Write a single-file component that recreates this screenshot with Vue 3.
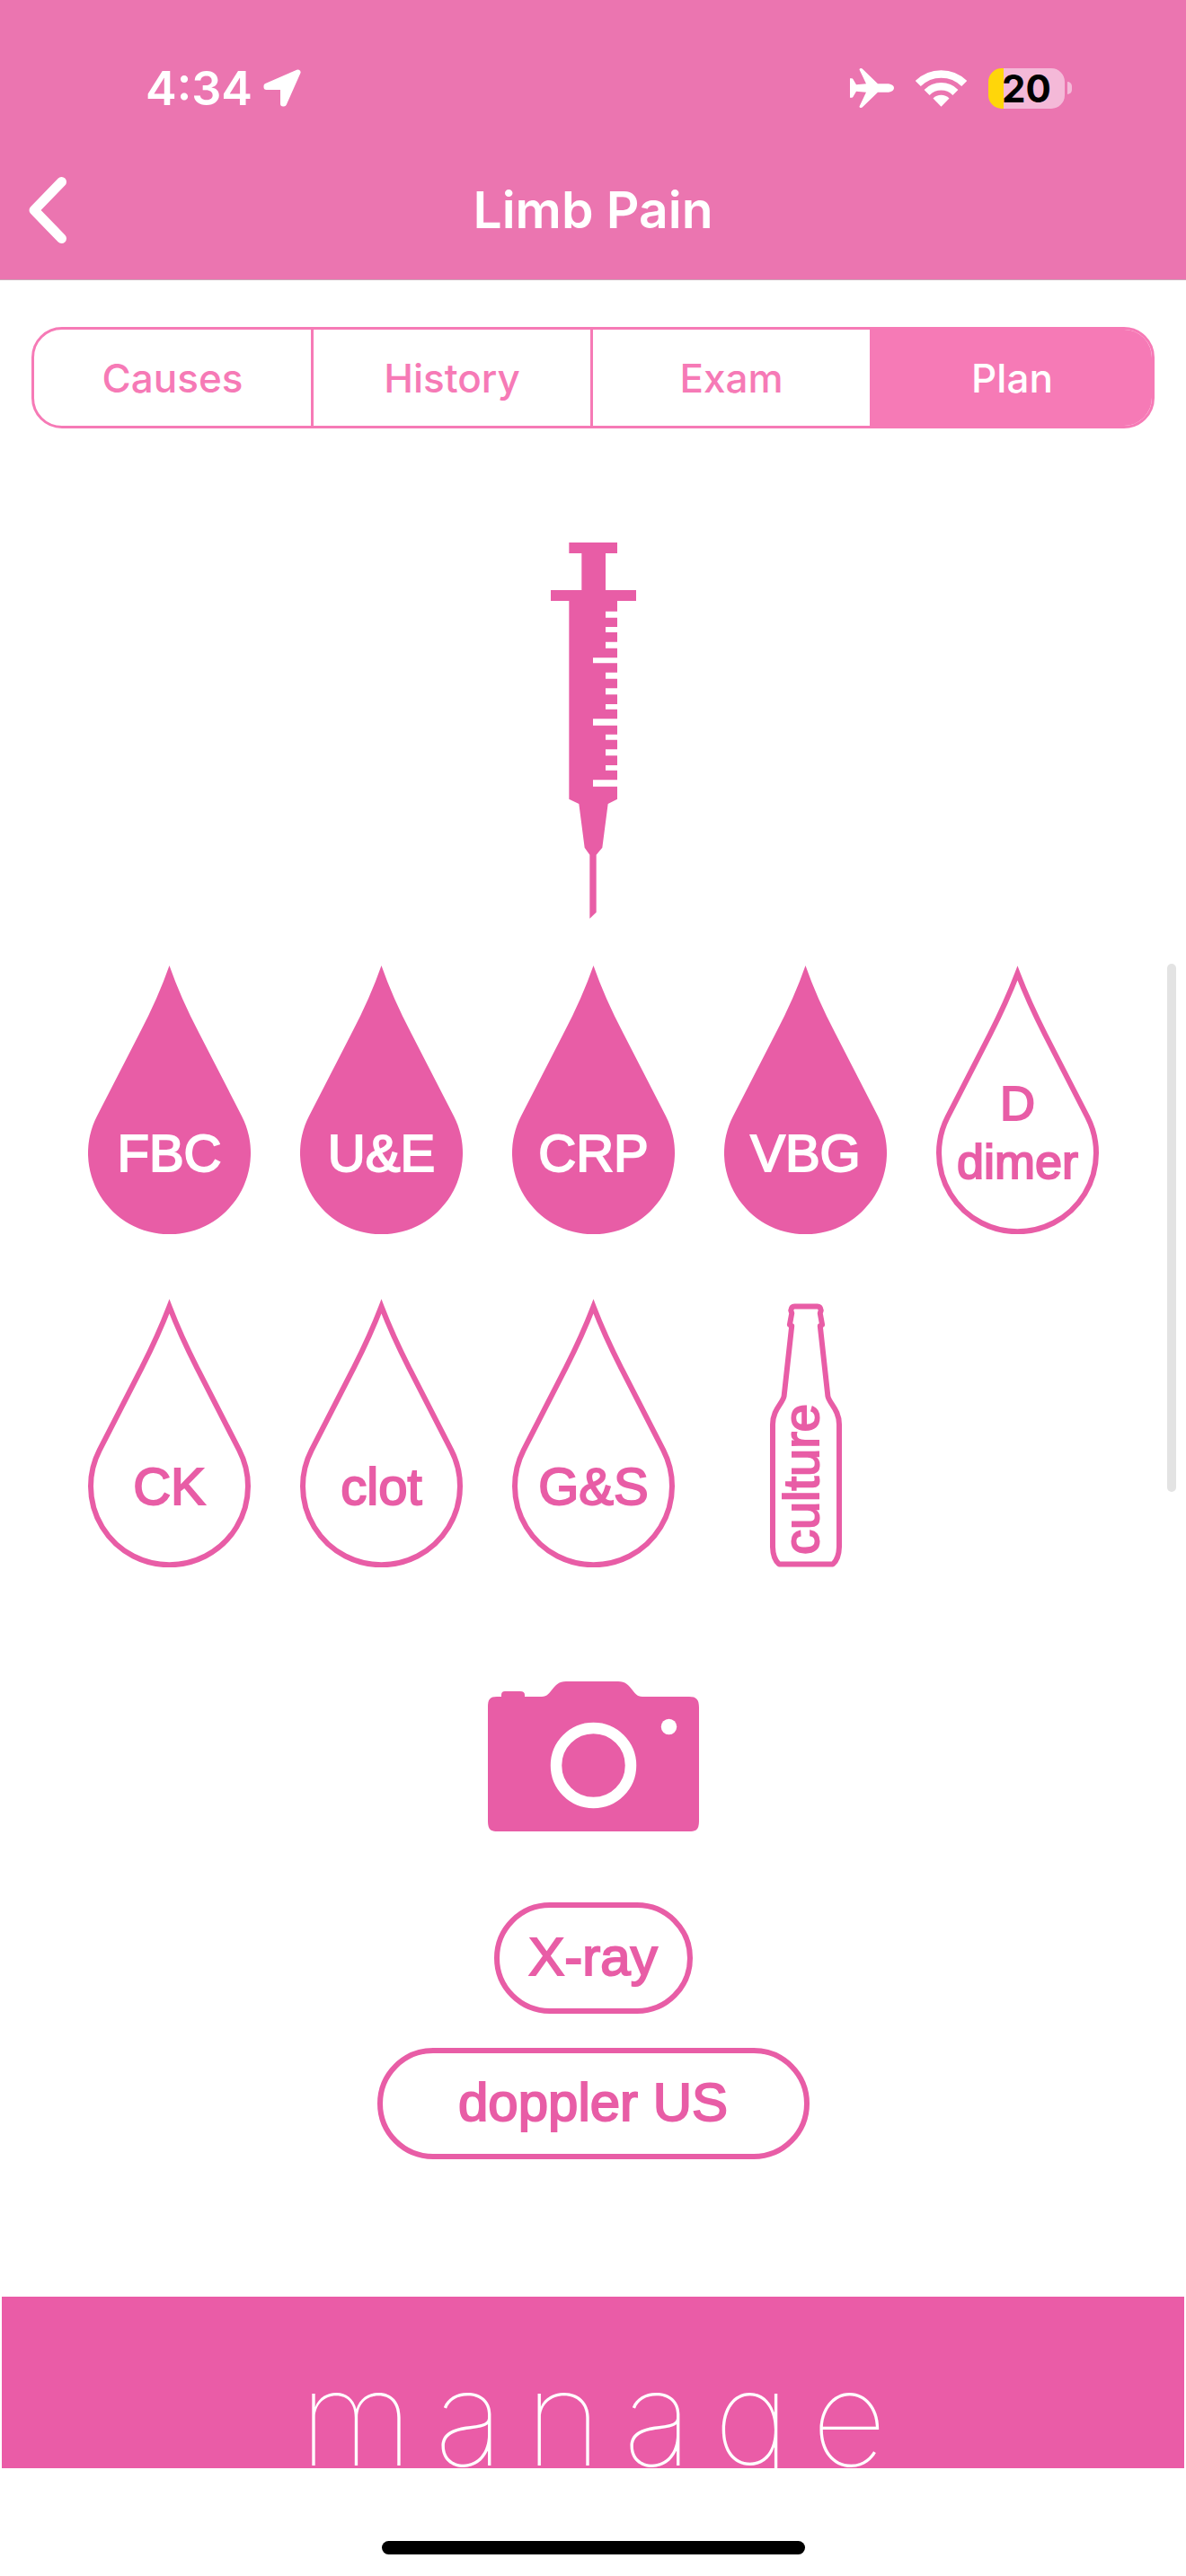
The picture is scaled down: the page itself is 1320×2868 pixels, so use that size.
<script setup>
import { ref } from 'vue'

const tabs = ['Causes', 'History', 'Exam', 'Plan']
const activeTab = ref('Plan')

const bloods = ref([
  { lines: ['FBC'], on: true },
  { lines: ['U&E'], on: true },
  { lines: ['CRP'], on: true },
  { lines: ['VBG'], on: true },
  { lines: ['D', 'dimer'], on: false },
  { lines: ['CK'], on: false },
  { lines: ['clot'], on: false },
  { lines: ['G&S'], on: false },
])

const imaging = [
  { name: 'X-ray', size: 'short' },
  { name: 'doppler US', size: 'long' },
]
</script>

<template>
  <div class="screen">
    <header class="header">
      <div class="status">
        <div class="status-group">
          <span class="time">4:34</span>
          <svg class="location" viewBox="0 0 42 42" width="42" height="42" aria-hidden="true">
            <path d="M38.5 3.5 3.5 18.8V20H22v18.5h1z" fill="#fff" stroke="#fff" stroke-width="6" stroke-linejoin="round" />
          </svg>
        </div>
        <div class="status-group icons">
          <svg viewBox="0 0 49 44" width="49" height="44" aria-hidden="true">
            <path d="M10.5 1.5Q10.500 0 12 0 13.500 0 14.200 1L31 17.300H43Q49 18.500 49 22 49 25.500 43 26.800H31L14.200 43Q13.500 44 12 44 10.500 44 10.500 42.500L18 26.800 7 25.800 3.500 31.800Q3 32.700 2 32.700H0V11.300H2Q3 11.300 3.500 12.200L7 18.200 18 17.300Z" fill="#fff" />
          </svg>
          <svg viewBox="0 0 57 42" width="57" height="42" aria-hidden="true">
            <g fill="none" stroke="#fff">
              <path d="M2.800 16A36.500 36.500 0 0 1 54.200 16" stroke-width="8.500" />
              <path d="M12.600 25.900A22.500 22.500 0 0 1 44.400 25.900" stroke-width="8.500" />
            </g>
            <path d="M19.500 32.400A13 13 0 0 1 37.500 32.400L28.500 41.800Z" fill="#fff" />
          </svg>
          <div class="battery">
            <div class="cell"><span>20</span></div>
            <div class="nub"></div>
          </div>
        </div>
      </div>
      <nav class="nav">
        <button class="back" type="button" aria-label="Back">
          <svg viewBox="0 0 43 74" width="43" height="74" aria-hidden="true">
            <path d="M37.500 5.500 7 37 37.500 68.500" fill="none" stroke="#fff" stroke-width="11" stroke-linecap="round" stroke-linejoin="round" />
          </svg>
        </button>
        <h1 class="title">Limb Pain</h1>
      </nav>
    </header>

    <main class="content">
      <div class="segments">
        <button
          v-for="tab in tabs"
          :key="tab"
          type="button"
          class="segment"
          :class="{ active: tab === activeTab }"
          @click="activeTab = tab"
        >{{ tab }}</button>
      </div>

      <svg class="syringe" viewBox="99 71 285 1257" width="95" height="419" aria-hidden="true">
        <path
          d="M160 71H321V107H282V230H384V266H321V301H282V322H321V353H282V371H321V403H282V424H321V456H240V474H321V505H282V526H321V558H282V579H321V611H282V628H321V660H240V682H321V712H282V730H321V762H282V783H321V815H282V832H321V864H240V886H321V928L290 944 271 1090 251 1114V1306L229 1327V1114L212 1090 193 944 160 928V266H99V230H202V107H160Z"
          fill="#e85da6"
        />
      </svg>

      <div class="tests">
        <button
          v-for="test in bloods"
          :key="test.lines[0]"
          type="button"
          class="drop"
          :class="{ on: test.on, double: test.lines.length > 1 }"
          @click="test.on = !test.on"
        >
          <svg viewBox="0 0 181 299" width="181" height="299" aria-hidden="true">
            <path v-if="test.on" d="M90.500 0Q78 36 57 76L10 167.400A90.500 90.500 0 1 0 171 167.400L124 76Q103 36 90.500 0Z" fill="#e85da6" />
            <path v-else d="M90.500 8.500Q78 41 59.700 77L12.700 168.700A87.500 87.500 0 1 0 168.300 168.700L121.300 77Q103 41 90.500 8.500Z" fill="none" stroke="#e85da6" stroke-width="6" stroke-miterlimit="10" />
          </svg>
          <span class="drop-label">
            <span v-for="line in test.lines" :key="line">{{ line }}</span>
          </span>
        </button>
        <button type="button" class="bottle">
          <svg viewBox="948 60 241 882" width="80" height="294" aria-hidden="true">
            <path
              d="M1068 69H1030Q1020 69 1018 82L1021 92 1014 130 1021 134 995 370C990 395 957 415 957 465V875Q958 915 978 933H1159Q1179 915 1180 875V465C1180 415 1147 395 1142 370L1116 134 1123 130 1116 92 1119 82Q1117 69 1107 69Z"
              fill="none" stroke="#e85da6" stroke-width="18" stroke-linejoin="round"
            />
          </svg>
          <span class="bottle-label">culture</span>
        </button>
      </div>

      <svg class="camera" viewBox="0 0 235 167" width="235" height="167" aria-hidden="true">
        <path
          d="M10 17H15V15Q15 11 19 11H36Q41 11 41 15V17H60C72 17 71 0 87 0H145C161 0 160 17 172 17H224C232 17 235 20 235 29V155C235 165 232 167 224 167H11C3 167 0 165 0 155V29C0 20 2 17 10 17Z"
          fill="#e85da6"
        />
        <circle cx="117.500" cy="93.500" r="41.500" fill="none" stroke="#fff" stroke-width="12.500" />
        <circle cx="201.500" cy="50.500" r="8.700" fill="#fff" />
      </svg>

      <div class="imaging">
        <button v-for="item in imaging" :key="item.name" type="button" class="pill" :class="item.size">{{ item.name }}</button>
      </div>

      <section class="band">
        <h2>manage</h2>
      </section>
      <div class="scrollbar"></div>
    </main>

    <footer class="home"><div class="indicator"></div></footer>
  </div>
</template>

<style>
body {
  margin: 0;
  background: #fff;
}
</style>

<style scoped>
.screen {
  min-height: 100vh;
  display: flex;
  flex-direction: column;
  font-family: Inter, "Liberation Sans", sans-serif;
  background: #fff;
}
button {
  margin: 0;
  padding: 0;
  border: 0;
  background: none;
  font: inherit;
  cursor: pointer;
}
svg {
  display: block;
}
.header {
  background: #eb75b0;
  border-bottom: 1px solid #c9a9b9;
  color: #fff;
  padding-bottom: 39px;
}
.status {
  height: 196px;
  padding: 0 127px 0 162px;
  display: flex;
  align-items: center;
  justify-content: space-between;
}
.status-group {
  display: flex;
  align-items: center;
  gap: 12px;
}
.status-group.icons {
  gap: 24px;
}
.time {
  font-size: 52px;
  font-weight: 600;
}
.battery {
  display: flex;
  align-items: center;
  gap: 3px;
}
.cell {
  width: 85px;
  height: 45px;
  border-radius: 15px;
  background: linear-gradient(to right, #ffd60a 17px, #f4b9d8 17px);
  color: #000;
  font-size: 42px;
  font-weight: 700;
  line-height: 45px;
  text-align: center;
}
.nub {
  width: 5px;
  height: 14px;
  border-radius: 0 5px 5px 0;
  background: #f4b9d8;
}
.nav {
  height: 76px;
  padding: 0 31px;
  display: grid;
  grid-template-columns: 1fr auto 1fr;
  align-items: center;
}
.back {
  justify-self: start;
}
.title {
  margin: 0;
  font-size: 57px;
  font-weight: 600;
  line-height: 74px;
}
.content {
  position: relative;
  flex: 1;
  display: flex;
  flex-direction: column;
  align-items: center;
  padding-top: 52px;
}
.segments {
  align-self: stretch;
  box-sizing: border-box;
  height: 113px;
  margin: 0 35px;
  display: grid;
  grid-template-columns: repeat(4, 1fr);
  border: 3px solid #f67ab6;
  border-radius: 34px;
  overflow: hidden;
}
.segment {
  color: #f67ab6;
  font-size: 44px;
  font-weight: 500;
}
.segment:not(:last-child) {
  border-right: 3px solid #f67ab6;
}
.segment.active {
  background: #f67ab6;
  color: #fff;
}
.syringe {
  margin-top: 127px;
}
.tests {
  align-self: stretch;
  margin: 52px 97px 0 98px;
  display: grid;
  grid-template-columns: repeat(5, 181px);
  justify-content: space-between;
  row-gap: 72px;
}
.drop,
.bottle {
  display: grid;
  color: #e85da6;
  font-family: "Liberation Sans", Arial, sans-serif;
  font-size: 58px;
  -webkit-text-stroke: 2px currentColor;
}
.drop > *,
.bottle > * {
  grid-area: 1 / 1;
}
.drop.on {
  color: #fff;
}
.drop-label {
  padding-top: 118px;
  display: flex;
  flex-direction: column;
  align-items: center;
  justify-content: center;
}
.drop.double .drop-label {
  padding-bottom: 46px;
  font-size: 54px;
  line-height: 65px;
}
.bottle {
  justify-items: center;
  align-items: end;
}
.bottle-label {
  padding: 14px 0 0 10px;
  writing-mode: vertical-rl;
  transform: rotate(180deg);
  font-size: 56px;
  line-height: 60px;
}
.camera {
  margin-top: 127px;
}
.imaging {
  margin-top: 79px;
  display: flex;
  flex-direction: column;
  align-items: center;
  gap: 38px;
}
.pill {
  box-sizing: border-box;
  height: 124px;
  padding-bottom: 4px;
  border: 6px solid #e85da6;
  border-radius: 62px;
  color: #e85da6;
  font-family: "Liberation Sans", Arial, sans-serif;
  font-size: 60px;
  -webkit-text-stroke: 2px currentColor;
}
.pill.short {
  width: 221px;
}
.pill.long {
  width: 481px;
}
.band {
  align-self: stretch;
  height: 191px;
  margin: 153px 2px 0;
  overflow: hidden;
  background: #ea5ca7;
  color: #fff;
  text-align: center;
}
.band h2 {
  margin: 0;
  padding: 45px 0 0 24px;
  font-size: 146px;
  font-weight: 100;
  line-height: 180px;
  letter-spacing: 24px;
}
.scrollbar {
  position: absolute;
  top: 761px;
  right: 11px;
  width: 10px;
  height: 588px;
  border-radius: 5px;
  background: #e3e3e3;
}
.home {
  height: 120px;
  display: flex;
  justify-content: center;
  align-items: flex-end;
}
.indicator {
  width: 471px;
  height: 15px;
  margin-bottom: 24px;
  border-radius: 8px;
  background: #000;
}
</style>
